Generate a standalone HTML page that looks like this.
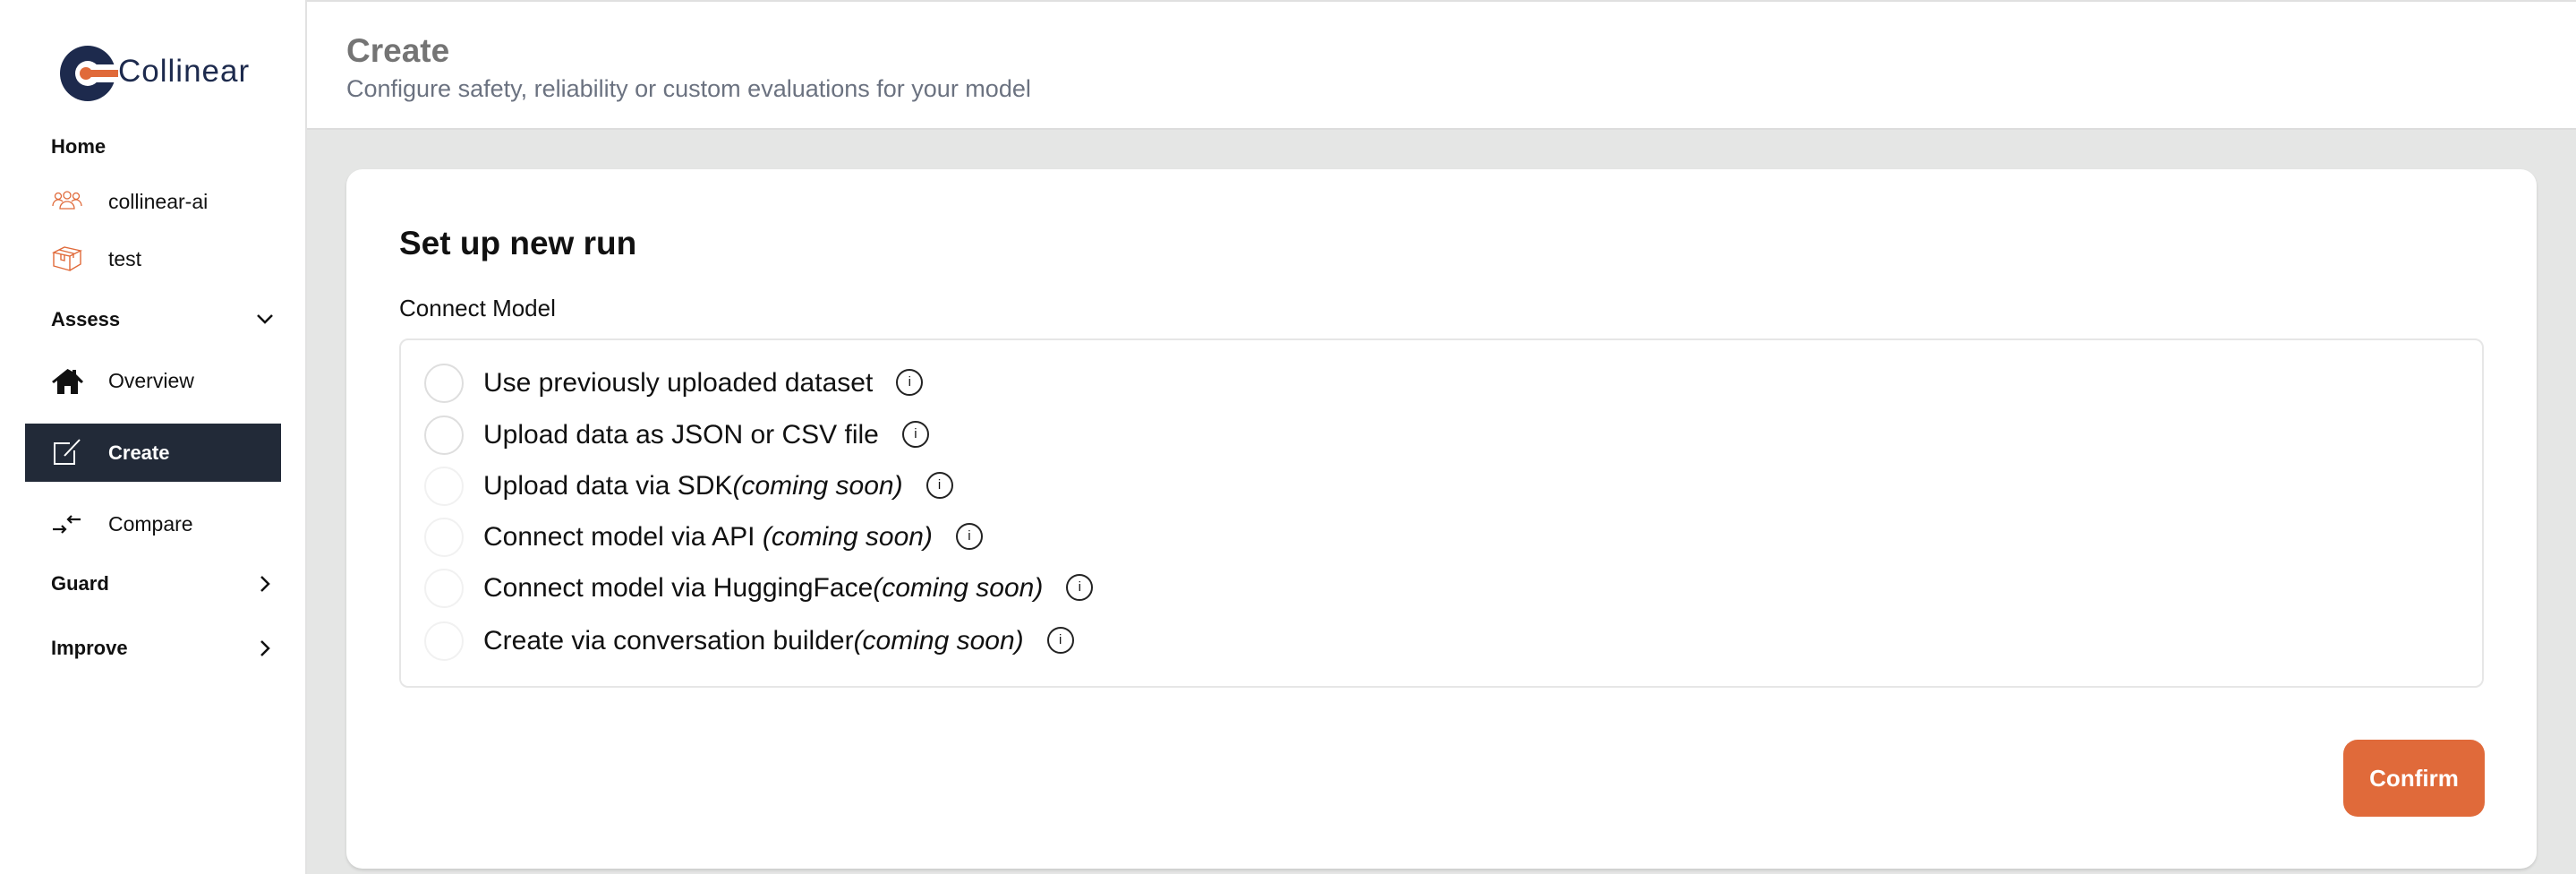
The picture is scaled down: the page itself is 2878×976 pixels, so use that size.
<!DOCTYPE html>
<html><head><meta charset="utf-8"><style>
*{box-sizing:border-box;margin:0;padding:0}
body{width:2878px;height:976px;overflow:hidden;background:#e5e6e5;font-family:"Liberation Sans",sans-serif;position:relative}
.side{position:absolute;left:0;top:0;width:343px;height:976px;background:#fff;border-right:2px solid #e2e2e2}
.hdr{position:absolute;left:343px;top:0;width:2535px;height:145px;background:#fff;border-top:2px solid #e0e0e0;border-bottom:2px solid #dcdcdc}
.abs{position:absolute;white-space:nowrap}
.nav{font-size:23px;color:#111}
.navb{font-size:22px;font-weight:bold;color:#111}
.card{position:absolute;left:387px;top:189px;width:2447px;height:781px;background:#fff;border-radius:18px;box-shadow:0 2px 3px rgba(0,0,0,.12)}
.box{position:absolute;left:446px;top:378px;width:2329px;height:390px;border:2px solid #e6e6e6;border-radius:10px}
.radio{position:absolute;left:474px;width:44px;height:44px;border-radius:50%;border:2px solid #dedede}
.opt{position:absolute;left:540px;font-size:30px;color:#111;white-space:nowrap;line-height:34px}
.opt i{font-style:italic}
.info{display:inline-block;width:30px;height:30px;border:2px solid #222;border-radius:50%;font-size:15px;text-align:center;line-height:26px;vertical-align:middle;margin-left:26px;font-style:normal;position:relative;top:-2px}
</style></head><body>
<div class="side">
  <svg class="abs" style="left:66px;top:50px" width="66" height="64" viewBox="0 0 66 64">
    <circle cx="32" cy="32" r="31" fill="#1d2a4d"/>
    <circle cx="32" cy="32" r="14" fill="#fff"/>
    <rect x="32" y="22" width="34" height="20" fill="#fff"/>
    <rect x="30" y="28" width="36" height="8" fill="#e06a3a"/>
    <circle cx="30" cy="32" r="7" fill="#e06a3a"/>
  </svg>
  <div class="abs" style="left:132px;top:60px;font-size:35px;color:#1d2a4d;letter-spacing:1px">Collinear</div>
  <div class="abs navb" style="left:57px;top:151px">Home</div>
  <svg class="abs" style="left:58px;top:213px" width="34" height="22" viewBox="0 0 34 22" fill="none" stroke="#e06a3a" stroke-width="1.3">
    <circle cx="7" cy="6" r="3.5"/><circle cx="17" cy="5" r="4"/><circle cx="27" cy="6" r="3.5"/>
    <path d="M1 17c0-4 3-7 6-7s4 1 5 2M33 17c0-4-3-7-6-7s-4 1-5 2M9 20c0-5 4-8 8-8s8 3 8 8z"/>
  </svg>
  <div class="abs nav" style="left:121px;top:212px">collinear-ai</div>
  <svg class="abs" style="left:58px;top:273px" width="34" height="30" viewBox="0 0 34 30" fill="none" stroke="#e06a3a" stroke-width="1.4">
    <path d="M2 9l12-6 18 4-12 6zM2 9v15l18 5v-16M32 7v15l-12 7M8 6l16 4v5"/><path d="M10 11v6l4 1v-6"/>
  </svg>
  <div class="abs nav" style="left:121px;top:276px">test</div>
  <div class="abs navb" style="left:57px;top:344px">Assess</div>
  <svg class="abs" style="left:286px;top:350px" width="20" height="12" viewBox="0 0 20 12"><path d="M2 2l8 8 8-8" fill="none" stroke="#111" stroke-width="2.5"/></svg>
  <svg class="abs" style="left:57px;top:411px" width="37" height="30" viewBox="0 0 37 30"><path d="M18.5 1L1 15l2 2 4-3v15h8v-9h7v9h8V14l4 3 2-2L28 7V2h-4v2z" fill="#111"/></svg>
  <div class="abs nav" style="left:121px;top:412px">Overview</div>
  <div class="abs" style="left:28px;top:473px;width:286px;height:65px;background:#222a38"></div>
  <svg class="abs" style="left:58px;top:488px" width="34" height="34" viewBox="0 0 34 34" fill="none" stroke="#fff" stroke-width="2"><path d="M20 7H3v23h22V15"/><path d="M14 21L31 3"/></svg>
  <div class="abs navb" style="left:121px;top:493px;color:#fff">Create</div>
  <svg class="abs" style="left:58px;top:574px" width="34" height="22" viewBox="0 0 34 22" fill="none" stroke="#111" stroke-width="2.2"><path d="M1 17h14M11 13l4 4-4 4M32 6H18M22 2l-4 4 4 4"/></svg>
  <div class="abs nav" style="left:121px;top:572px">Compare</div>
  <div class="abs navb" style="left:57px;top:639px">Guard</div>
  <svg class="abs" style="left:290px;top:642px" width="12" height="20" viewBox="0 0 12 20"><path d="M2 2l8 8-8 8" fill="none" stroke="#111" stroke-width="2.5"/></svg>
  <div class="abs navb" style="left:57px;top:711px">Improve</div>
  <svg class="abs" style="left:290px;top:714px" width="12" height="20" viewBox="0 0 12 20"><path d="M2 2l8 8-8 8" fill="none" stroke="#111" stroke-width="2.5"/></svg>
</div>
<div class="hdr">
  <div class="abs" style="left:44px;top:34px;font-size:37px;color:#747474;font-weight:bold">Create</div>
  <div class="abs" style="left:44px;top:82px;font-size:27px;color:#6b7280">Configure safety, reliability or custom evaluations for your model</div>
</div>
<div class="card"></div>
<div class="abs" style="left:446px;top:251px;font-size:37px;font-weight:bold;color:#111">Set up new run</div>
<div class="abs" style="left:446px;top:329px;font-size:26px;color:#111">Connect Model</div>
<div class="box"></div>
<div class="radio" style="top:406px"></div>
<div class="radio" style="top:464px"></div>
<div class="radio" style="top:521px;border-color:#f1f1f1"></div>
<div class="radio" style="top:578px;border-color:#f1f1f1"></div>
<div class="radio" style="top:635px;border-color:#f1f1f1"></div>
<div class="radio" style="top:694px;border-color:#f1f1f1"></div>
<div class="opt" style="top:411px">Use previously uploaded dataset<span class="info">i</span></div>
<div class="opt" style="top:469px">Upload data as JSON or CSV file<span class="info">i</span></div>
<div class="opt" style="top:526px">Upload data via SDK<i>(coming soon)</i><span class="info">i</span></div>
<div class="opt" style="top:583px">Connect model via API <i>(coming soon)</i><span class="info">i</span></div>
<div class="opt" style="top:640px">Connect model via HuggingFace<i>(coming soon)</i><span class="info">i</span></div>
<div class="opt" style="top:699px">Create via conversation builder<i>(coming soon)</i><span class="info">i</span></div>
<div class="abs" style="left:2618px;top:826px;width:158px;height:86px;background:#e06a3a;border-radius:16px;color:#fff;font-weight:bold;font-size:26px;text-align:center;line-height:86px">Confirm</div>
</body></html>
